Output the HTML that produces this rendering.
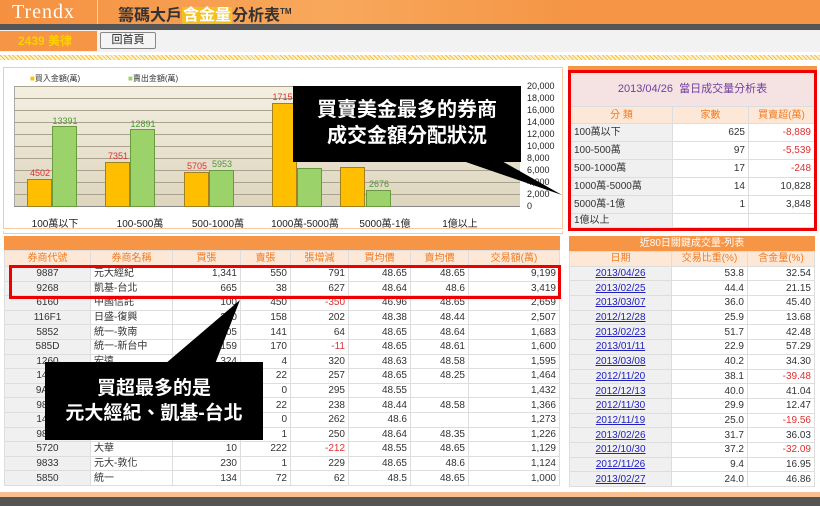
<!DOCTYPE html>
<html><head><meta charset="utf-8"><style>
*{margin:0;padding:0;box-sizing:border-box}
body{width:820px;height:506px;overflow:hidden;background:#fff;position:relative;font-family:"Liberation Sans","Noto Sans CJK TC",sans-serif;font-size:10px;color:#333}
.a{position:absolute}
table{border-collapse:collapse;table-layout:fixed}
td{border:1px solid #ddd;white-space:nowrap;padding:0 3px;line-height:13px;vertical-align:middle}
.r{text-align:right}.c{text-align:center}.red{color:#e03030}
.g{background:#f0f0f0}
.bar{position:absolute;border:1px solid #a08020}
.y{background:#ffbf00}.gr{background:#9bd26a;border-color:#6a9a40}
.vl{position:absolute;font-size:9px;text-align:center;width:40px}
.cat{position:absolute;top:215px;font-size:10px;width:90px;text-align:center;color:#222}
.yl{position:absolute;left:527px;font-size:9px;color:#222}
.hl{position:absolute;left:14px;width:506px;height:1px;background:#a9a28c}
a{color:#2020c0}
#lt tr{height:14.6px}
#lt tr:first-child{height:16px}
#rb tr{height:14.7px}
</style></head><body>
<div class="a" style="left:0;top:0;width:820px;height:24px;background:linear-gradient(90deg,#f59040 0,#f8a85c 40%,#f59545 70%,#f59545 100%)"></div>
<div class="a" style="left:12px;top:1px;font-family:'Liberation Serif',serif;font-size:20px;color:#fff;letter-spacing:1px">Trendx</div>
<div class="a" style="left:97px;top:0;width:1px;height:24px;background:#fbd0a8"></div>
<div class="a" style="left:118px;top:3px;font-size:16px;font-weight:bold;color:#333;line-height:18px">籌碼大戶<span style="background:#f4c020;color:#fff;padding:0 1px">含金量</span>分析表<sup style="font-size:8px">TM</sup></div>
<div class="a" style="left:0;top:24px;width:820px;height:6px;background:#555"></div>
<div class="a" style="left:0;top:30px;width:820px;height:22px;background:#f2f2f2"></div>
<div class="a" style="left:0;top:31px;width:97px;height:20px;background:#f59545;color:#ffd000;font-weight:bold;font-size:12px;line-height:20px;padding-left:18px">2439 美律</div>
<div class="a" style="left:100px;top:32px;width:56px;height:17px;background:#f4f4f4;border:1px solid #888;border-radius:2px;font-size:11px;text-align:center;line-height:15px;color:#222">回首頁</div>
<div class="a" style="left:0;top:55px;width:820px;height:5px;background:repeating-linear-gradient(45deg,#f5c040 0 1px,#fff3cc 1px 3px)"></div>

<div class="a" style="left:3px;top:67px;width:560px;height:162px;border:1px solid #f8c8a0;background:#fff"></div>
<div class="a" style="left:30px;top:73px;font-size:8px"><span style="color:#ffbf00">■</span>買入金額(萬)</div>
<div class="a" style="left:128px;top:73px;font-size:8px"><span style="color:#9bd26a">■</span>賣出金額(萬)</div>
<div class="a" style="left:14px;top:86px;width:506px;height:121px;background:linear-gradient(#f4efe2,#ddd5bd);border-left:1px solid #aaa"></div>
<div class="hl" style="top:86px"></div><div class="hl" style="top:98px"></div><div class="hl" style="top:110px"></div><div class="hl" style="top:122px"></div><div class="hl" style="top:134px"></div><div class="hl" style="top:146px"></div><div class="hl" style="top:158px"></div><div class="hl" style="top:170px"></div><div class="hl" style="top:182px"></div><div class="hl" style="top:194px"></div><div class="hl" style="top:206px;background:#888"></div>
<div class="bar y" style="left:27px;top:179px;width:25px;height:28px"></div>
<div class="bar gr" style="left:52px;top:126px;width:25px;height:81px"></div>
<div class="bar y" style="left:105px;top:162px;width:25px;height:45px"></div>
<div class="bar gr" style="left:130px;top:129px;width:25px;height:78px"></div>
<div class="bar y" style="left:184px;top:172px;width:25px;height:35px"></div>
<div class="bar gr" style="left:209px;top:170px;width:25px;height:37px"></div>
<div class="bar y" style="left:272px;top:103px;width:25px;height:104px"></div>
<div class="bar gr" style="left:297px;top:168px;width:25px;height:39px"></div>
<div class="bar y" style="left:340px;top:167px;width:25px;height:40px"></div>
<div class="bar gr" style="left:366px;top:190px;width:25px;height:17px"></div>
<div class="vl red" style="left:20px;top:168px">4502</div>
<div class="vl" style="left:45px;top:116px;color:#4a9a30">13391</div>
<div class="vl red" style="left:98px;top:151px">7351</div>
<div class="vl" style="left:123px;top:119px;color:#4a9a30">12891</div>
<div class="vl red" style="left:177px;top:161px">5705</div>
<div class="vl" style="left:202px;top:159px;color:#4a9a30">5953</div>
<div class="vl red" style="left:265px;top:92px">17153</div>
<div class="vl" style="left:359px;top:179px;color:#4a9a30">2676</div>
<div class="cat" style="left:10px">100萬以下</div><div class="cat" style="left:95px">100-500萬</div><div class="cat" style="left:173px">500-1000萬</div><div class="cat" style="left:260px">1000萬-5000萬</div><div class="cat" style="left:340px">5000萬-1億</div><div class="cat" style="left:415px">1億以上</div>
<div class="yl" style="top:81px">20,000</div><div class="yl" style="top:93px">18,000</div><div class="yl" style="top:105px">16,000</div><div class="yl" style="top:117px">14,000</div><div class="yl" style="top:129px">12,000</div><div class="yl" style="top:141px">10,000</div><div class="yl" style="top:153px">8,000</div><div class="yl" style="top:165px">6,000</div><div class="yl" style="top:177px">4,000</div><div class="yl" style="top:189px">2,000</div><div class="yl" style="top:201px">0</div>

<div class="a" style="left:568px;top:66px;width:249px;height:166px;border-top:4px solid #f59545;background:#fff"></div>
<div class="a" style="left:570px;top:72px;width:245px;height:34px;background:#f5e2e2;color:#7040a0;font-size:11px;text-align:center;line-height:34px">2013/04/26&nbsp; 當日成交量分析表</div>
<table class="a" style="left:570px;top:106px;width:245px;font-size:10px">
<colgroup><col style="width:102px"><col style="width:76px"><col></colgroup>
<tr style="height:17px;color:#f07a20;background:#fde8d8"><td class="c">分 類</td><td class="c">家數</td><td class="c">買賣超(萬)</td></tr>
<tr style="height:18px"><td class="g">100萬以下</td><td class="r">625</td><td class="r red">-8,889</td></tr>
<tr style="height:18px"><td class="g">100-500萬</td><td class="r">97</td><td class="r red">-5,539</td></tr>
<tr style="height:18px"><td class="g">500-1000萬</td><td class="r">17</td><td class="r red">-248</td></tr>
<tr style="height:18px"><td class="g">1000萬-5000萬</td><td class="r">14</td><td class="r">10,828</td></tr>
<tr style="height:18px"><td class="g">5000萬-1億</td><td class="r">1</td><td class="r">3,848</td></tr>
<tr style="height:12px"><td class="g" style="vertical-align:top">1億以上</td><td></td><td></td></tr>
</table>
<div class="a" style="left:568px;top:70px;width:249px;height:161px;border:3px solid #e00"></div>

<div class="a" style="left:569px;top:236px;width:246px;height:15px;background:#f59545;color:#fff;text-align:center;font-size:10px;line-height:15px">近80日關鍵成交量-列表</div>
<table id="rb" class="a" style="left:569px;top:251px;width:246px;font-size:10px">
<colgroup><col style="width:102px"><col style="width:76px"><col></colgroup>
<tr style="color:#f07a20;background:#fde8d8"><td class="c">日期</td><td class="c">交易比重(%)</td><td class="c">含金量(%)</td></tr>
<tr><td class="g c"><a href="#">2013/04/26</a></td><td class="r">53.8</td><td class="r">32.54</td></tr>
<tr><td class="g c"><a href="#">2013/02/25</a></td><td class="r">44.4</td><td class="r">21.15</td></tr>
<tr><td class="g c"><a href="#">2013/03/07</a></td><td class="r">36.0</td><td class="r">45.40</td></tr>
<tr><td class="g c"><a href="#">2012/12/28</a></td><td class="r">25.9</td><td class="r">13.68</td></tr>
<tr><td class="g c"><a href="#">2013/02/23</a></td><td class="r">51.7</td><td class="r">42.48</td></tr>
<tr><td class="g c"><a href="#">2013/01/11</a></td><td class="r">22.9</td><td class="r">57.29</td></tr>
<tr><td class="g c"><a href="#">2013/03/08</a></td><td class="r">40.2</td><td class="r">34.30</td></tr>
<tr><td class="g c"><a href="#">2012/11/20</a></td><td class="r">38.1</td><td class="r red">-39.48</td></tr>
<tr><td class="g c"><a href="#">2012/12/13</a></td><td class="r">40.0</td><td class="r">41.04</td></tr>
<tr><td class="g c"><a href="#">2012/11/30</a></td><td class="r">29.9</td><td class="r">12.47</td></tr>
<tr><td class="g c"><a href="#">2012/11/19</a></td><td class="r">25.0</td><td class="r red">-19.56</td></tr>
<tr><td class="g c"><a href="#">2013/02/26</a></td><td class="r">31.7</td><td class="r">36.03</td></tr>
<tr><td class="g c"><a href="#">2012/10/30</a></td><td class="r">37.2</td><td class="r red">-32.09</td></tr>
<tr><td class="g c"><a href="#">2012/11/26</a></td><td class="r">9.4</td><td class="r">16.95</td></tr>
<tr><td class="g c"><a href="#">2013/02/27</a></td><td class="r">24.0</td><td class="r">46.86</td></tr>
</table>

<div class="a" style="left:3px;top:231px;width:560px;height:3px;border:1px solid #f8c8a0;border-top:none"></div>
<div class="a" style="left:4px;top:236px;width:556px;height:14px;background:#f59545"></div>
<table id="lt" class="a" style="left:4px;top:250px;width:556px;font-size:10px">
<colgroup><col style="width:86px"><col style="width:82px"><col style="width:68px"><col style="width:50px"><col style="width:58px"><col style="width:62px"><col style="width:58px"><col></colgroup>
<tr style="color:#f07a20;background:#fde8d8"><td class="c">券商代號</td><td class="c">券商名稱</td><td class="c">買張</td><td class="c">賣張</td><td class="c">張增減</td><td class="c">買均價</td><td class="c">賣均價</td><td class="c">交易額(萬)</td></tr>
<tr><td class="g c">9887</td><td>元大經紀</td><td class="r">1,341</td><td class="r">550</td><td class="r">791</td><td class="r">48.65</td><td class="r">48.65</td><td class="r">9,199</td></tr>
<tr><td class="g c">9268</td><td>凱基-台北</td><td class="r">665</td><td class="r">38</td><td class="r">627</td><td class="r">48.64</td><td class="r">48.6</td><td class="r">3,419</td></tr>
<tr><td class="g c">6160</td><td>中國信託</td><td class="r">100</td><td class="r">450</td><td class="r red">-350</td><td class="r">46.96</td><td class="r">48.65</td><td class="r">2,659</td></tr>
<tr><td class="g c">116F1</td><td>日盛-復興</td><td class="r">360</td><td class="r">158</td><td class="r">202</td><td class="r">48.38</td><td class="r">48.44</td><td class="r">2,507</td></tr>
<tr><td class="g c">5852</td><td>統一-敦南</td><td class="r">205</td><td class="r">141</td><td class="r">64</td><td class="r">48.65</td><td class="r">48.64</td><td class="r">1,683</td></tr>
<tr><td class="g c">585D</td><td>統一-新台中</td><td class="r">159</td><td class="r">170</td><td class="r red">-11</td><td class="r">48.65</td><td class="r">48.61</td><td class="r">1,600</td></tr>
<tr><td class="g c">1260</td><td>宏遠</td><td class="r">324</td><td class="r">4</td><td class="r">320</td><td class="r">48.63</td><td class="r">48.58</td><td class="r">1,595</td></tr>
<tr><td class="g c">1440</td><td></td><td class="r">279</td><td class="r">22</td><td class="r">257</td><td class="r">48.65</td><td class="r">48.25</td><td class="r">1,464</td></tr>
<tr><td class="g c">9A00</td><td></td><td class="r">295</td><td class="r">0</td><td class="r">295</td><td class="r">48.55</td><td class="r"></td><td class="r">1,432</td></tr>
<tr><td class="g c">9800</td><td></td><td class="r">260</td><td class="r">22</td><td class="r">238</td><td class="r">48.44</td><td class="r">48.58</td><td class="r">1,366</td></tr>
<tr><td class="g c">1470</td><td></td><td class="r">262</td><td class="r">0</td><td class="r">262</td><td class="r">48.6</td><td class="r"></td><td class="r">1,273</td></tr>
<tr><td class="g c">9800</td><td></td><td class="r">251</td><td class="r">1</td><td class="r">250</td><td class="r">48.64</td><td class="r">48.35</td><td class="r">1,226</td></tr>
<tr><td class="g c">5720</td><td>大華</td><td class="r">10</td><td class="r">222</td><td class="r red">-212</td><td class="r">48.55</td><td class="r">48.65</td><td class="r">1,129</td></tr>
<tr><td class="g c">9833</td><td>元大-敦化</td><td class="r">230</td><td class="r">1</td><td class="r">229</td><td class="r">48.65</td><td class="r">48.6</td><td class="r">1,124</td></tr>
<tr><td class="g c">5850</td><td>統一</td><td class="r">134</td><td class="r">72</td><td class="r">62</td><td class="r">48.5</td><td class="r">48.65</td><td class="r">1,000</td></tr>
</table>
<div class="a" style="left:9px;top:265px;width:552px;height:34px;border:3px solid #e00"></div>

<svg class="a" style="left:0;top:0" width="820" height="506"><polygon points="460,160 500,160 562,195" fill="#000"/><polygon points="165,364 215,364 240,300" fill="#000"/></svg>
<div class="a" style="left:293px;top:86px;width:228px;height:76px;background:#000;color:#fff;font-weight:bold;font-size:20px;line-height:26px;text-align:center;padding-top:11px">買賣美金最多的券商<br>成交金額分配狀況</div>
<div class="a" style="left:45px;top:362px;width:218px;height:78px;background:#000;color:#fff;font-weight:bold;font-size:19px;line-height:25px;text-align:center;padding-top:14px">買超最多的是<br>元大經紀、凱基-台北</div>

<div class="a" style="left:0;top:492px;width:820px;height:5px;background:#f8c090"></div>
<div class="a" style="left:0;top:497px;width:820px;height:9px;background:#555"></div>
</body></html>
